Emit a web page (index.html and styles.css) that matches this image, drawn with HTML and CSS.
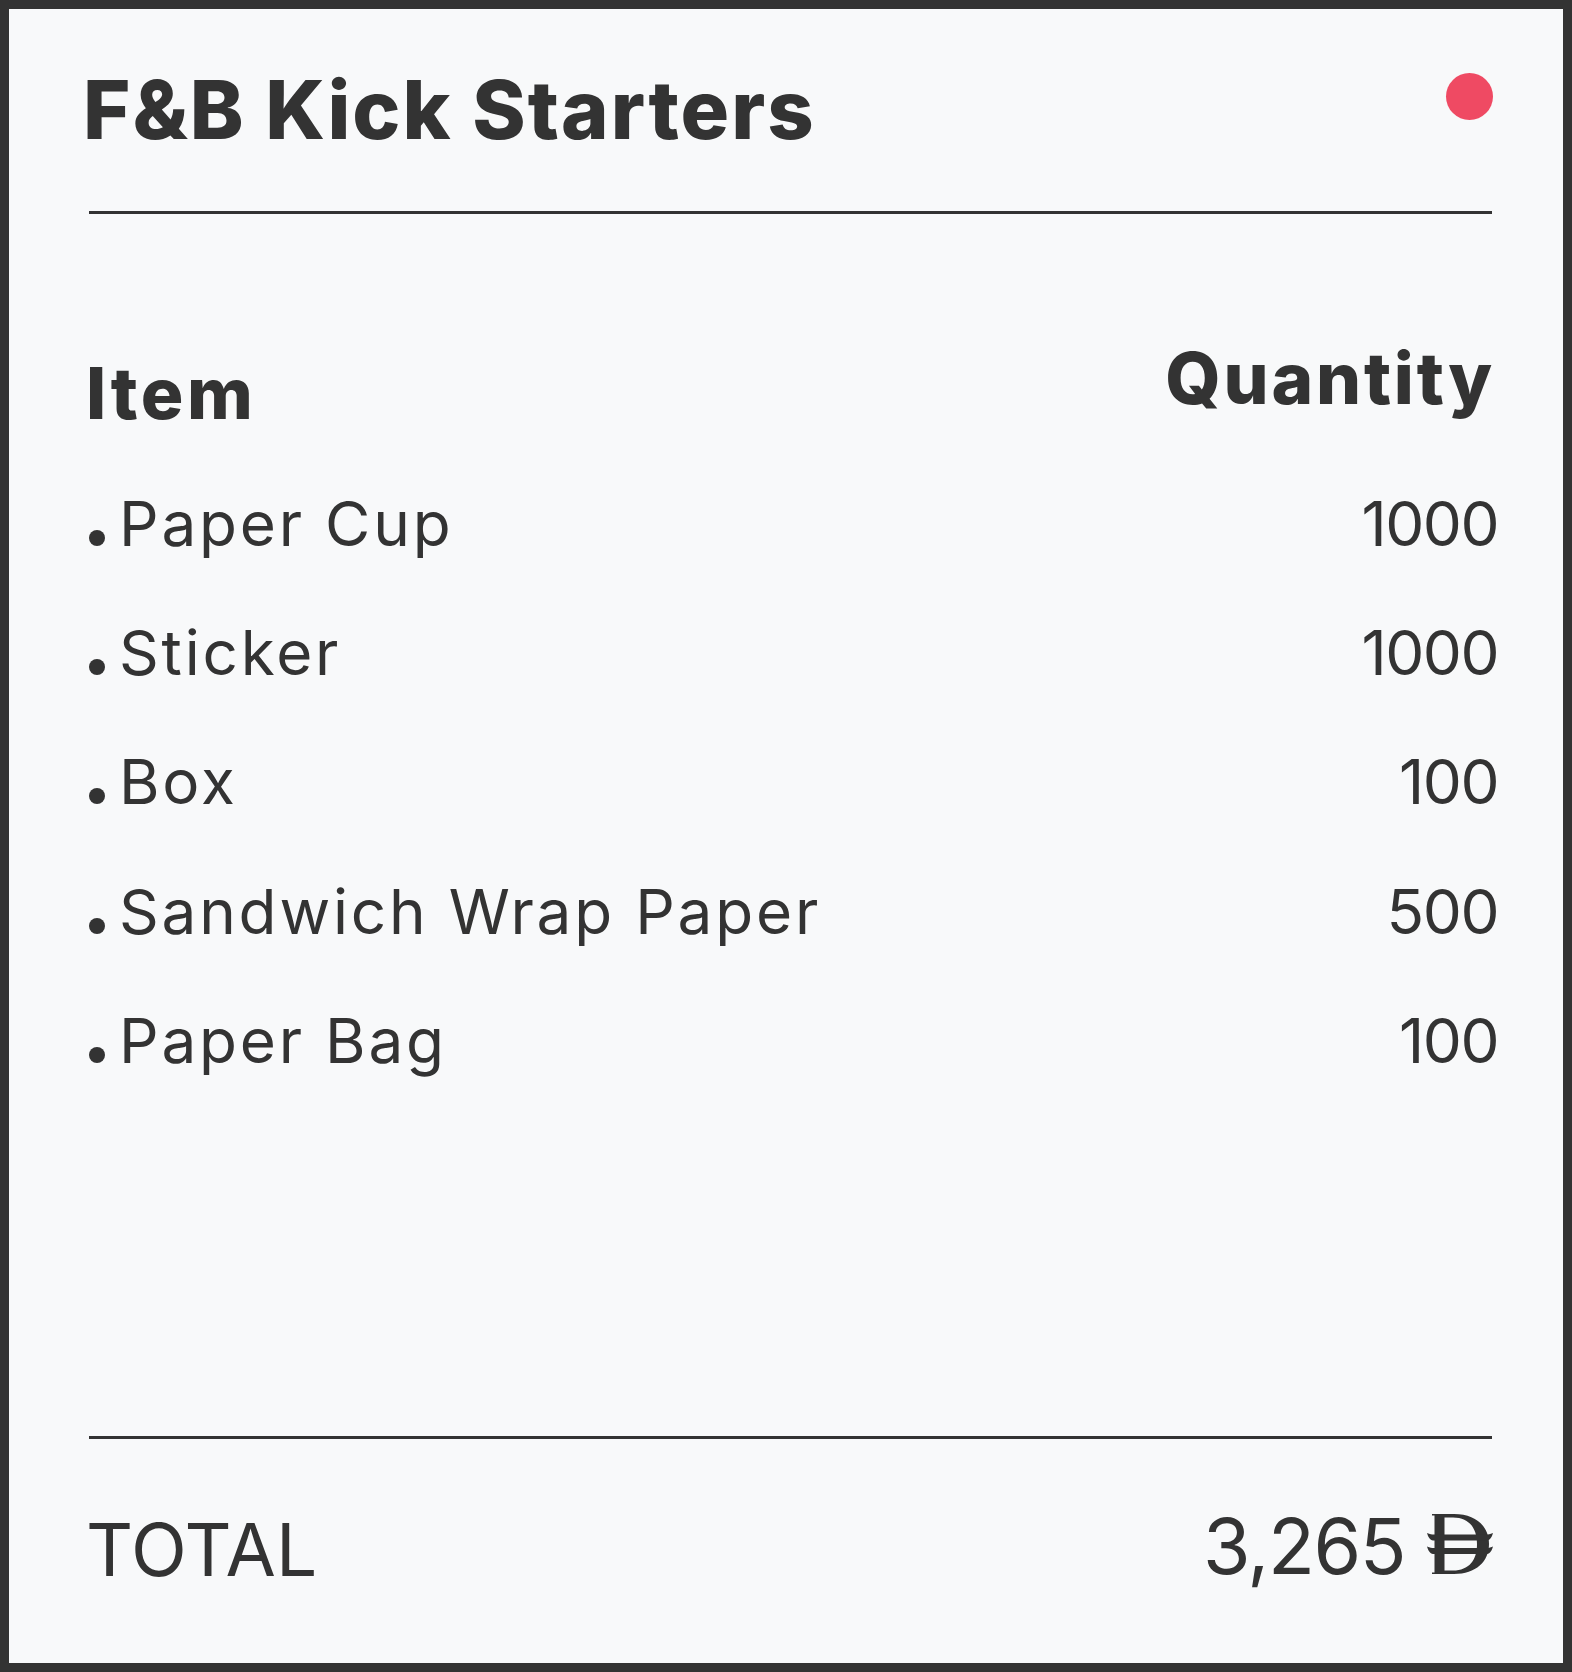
FILE: index.html
```html
<!DOCTYPE html>
<html lang="en">
<head>
  <meta charset="UTF-8" />
  <meta name="viewport" content="width=device-width, initial-scale=1.0" />
  <title>F&amp;B Kick Starters</title>
  <link rel="stylesheet" href="styles.css">
</head>
<body>
  <div class="card">
    <div class="card-header">
      <h1 class="card-title">F&amp;B Kick Starters</h1>
      <span class="status-dot"></span>
    </div>
    <div class="divider divider-top"></div>

    <div class="col-heads">
      <div class="col-item">Item</div>
      <div class="col-qty">Quantity</div>
    </div>

    <ul class="item-list">
      <li class="item-row"><span class="item-name"><span class="bullet"></span><span class="label">Paper Cup</span></span><span class="qty">1000</span></li>
      <li class="item-row"><span class="item-name"><span class="bullet"></span><span class="label">Sticker</span></span><span class="qty">1000</span></li>
      <li class="item-row"><span class="item-name"><span class="bullet"></span><span class="label">Box</span></span><span class="qty">100</span></li>
      <li class="item-row"><span class="item-name"><span class="bullet"></span><span class="label">Sandwich Wrap Paper</span></span><span class="qty">500</span></li>
      <li class="item-row"><span class="item-name"><span class="bullet"></span><span class="label">Paper Bag</span></span><span class="qty">100</span></li>
    </ul>

    <div class="divider divider-bottom"></div>
    <div class="total-row">
      <div class="total-label">TOTAL</div>
      <div class="total-amount"><span class="amount">3,265</span><svg class="dirham" viewBox="0 0 66 60" width="66" height="60" aria-label="AED">
          <path fill-rule="evenodd" d="M5 0 H27 C49 0 62 12.5 62 30 C62 47.5 49 60 27 60 H5 V58.6 H7.5 V1.4 H5 Z M17.5 3.5 H26 C42 3.5 50 14 50 30 C50 46 42 56.5 26 56.5 H17.5 Z"/>
          <path d="M0 19 C3 20 5 20.5 6.5 20.5 H59.5 C61 20.5 63 20 66 19 C65 22.5 63 26.5 60 26.5 H6 C3 26.5 1 22.5 0 19 Z"/>
          <path d="M0 32.5 C3 33.5 5 34 6.5 34 H59.5 C61 34 63 33.5 66 32.5 C65 36 63 40 60 40 H6 C3 40 1 36 0 32.5 Z"/>
        </svg></div>
    </div>
  </div>
</body>
</html>
```

FILE: styles.css
```css
* {
  box-sizing: border-box;
}
body {
  margin: 0;
  font-family: 'Inter', 'Liberation Sans', sans-serif;
  color: #333;
  background-color: #333;
}
.card {
  display: flex;
  flex-direction: column;
  height: 100vh;
  border: 9px solid #333;
  background-color: #f8f9fa;
  padding: 53px 70px 69px 80px;
}
.card-header {
  display: flex;
  justify-content: space-between;
  align-items: flex-start;
}
.card-title {
  margin: 0 0 0 -6px;
  font-size: 81px;
  line-height: 1.2;
  font-weight: 800;
  letter-spacing: 2px;
}
.status-dot {
  width: 47px;
  height: 47px;
  margin-top: 10.6px;
  border-radius: 50%;
  background-color: #ef4a63;
}
.divider {
  border-top: 3px solid #333;
}
.divider-top {
  margin-top: 52px;
  margin-right: 1px;
}
.divider-bottom {
  margin-right: 1px;
}
.col-heads {
  display: flex;
  justify-content: space-between;
  align-items: flex-start;
  margin-top: 121.6px;
  font-size: 71px;
  line-height: 1.2;
  font-weight: 800;
  letter-spacing: 3.5px;
}
.col-item {
  margin-top: 15px;
  margin-left: -3px;
}
.col-qty {
  margin-right: -2px;
  letter-spacing: 2.8px;
}
.item-list {
  flex: 1;
  list-style: none;
  margin: 51.2px 0 0;
  padding: 0;
  display: flex;
  flex-direction: column;
  gap: 54.75px;
}
.item-row {
  display: flex;
  justify-content: space-between;
  font-size: 62px;
  line-height: 1.2;
}
.label {
  letter-spacing: 2.8px;
}
.bullet {
  display: inline-block;
  width: 16px;
  height: 16px;
  border-radius: 50%;
  background-color: #333;
  margin-right: 14px;
}
.qty {
  margin-right: -5px;
  letter-spacing: -1.5px;
}
.total-row {
  display: flex;
  justify-content: space-between;
  align-items: flex-start;
  margin-top: 60.8px;
}
.total-label {
  margin-top: 6.5px;
  margin-left: -3px;
  font-size: 73px;
  line-height: 1.2;
  font-weight: 400;
}
.total-amount {
  font-size: 77px;
  line-height: 1.2;
}
.amount {
  letter-spacing: -1.5px;
}
.dirham {
  margin-left: 22px;
  fill: #333;
}
```
